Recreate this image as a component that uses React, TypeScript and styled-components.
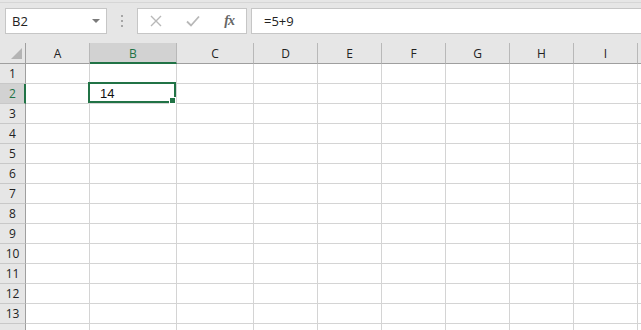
import styled, { createGlobalStyle } from "styled-components";

const GREEN = "#217346";
const GRID = "#d4d4d4";
const HEAD_BG = "#e6e6e6";
const HEAD_SEL = "#d2d2d2";
const HEAD_LINE = "#9f9f9f";

// the last column and last row run off the window, so their labels are not drawn
const COLS = [
    { name: "A", width: 64 },
    { name: "B", width: 87 },
    { name: "C", width: 77 },
    { name: "D", width: 64 },
    { name: "E", width: 64 },
    { name: "F", width: 64 },
    { name: "G", width: 64 },
    { name: "H", width: 64 },
    { name: "I", width: 64 },
    { name: "", width: 64 },
];
const ROWS = Array.from({ length: 14 }, (_, i) => i + 1);
const LAST_ROW = 14;

const GlobalStyle = createGlobalStyle`
    html, body { margin: 0; padding: 0; background: #ffffff; }
    body { width: 641px; height: 330px; overflow: hidden; }
`;

const Page = styled.div`
    width: 641px;
    height: 330px;
    overflow: hidden;
    background: ${HEAD_BG};
    font-family: "Open Sans", "Noto Sans", sans-serif;
`;

const TopEdge = styled.div`
    height: 2px;
    border-bottom: 1px solid #d6d6d6;
`;

const FormulaBar = styled.div`
    display: flex;
    align-items: stretch;
    height: 26px;
    padding: 5px 0 0 5px;
    margin-bottom: 9px;
`;

const NameBox = styled.div`
    box-sizing: border-box;
    width: 102px;
    display: flex;
    align-items: center;
    justify-content: space-between;
    padding: 0 6px 0 6px;
    background: #ffffff;
    border: 1px solid #c6c6c6;
    font-size: 13px;
    color: #222222;
`;

const Caret = styled.span`
    width: 0;
    height: 0;
    border-left: 4px solid transparent;
    border-right: 4px solid transparent;
    border-top: 4px solid #7a7a7a;
`;

const Grip = styled.div`
    width: 30px;
    display: flex;
    flex-direction: column;
    align-items: center;
    justify-content: center;
    gap: 3px;
    & span {
        width: 2px;
        height: 2px;
        background: #a6a6a6;
    }
`;

const FuncButtons = styled.div`
    box-sizing: border-box;
    width: 110px;
    display: flex;
    align-items: center;
    justify-content: space-between;
    padding: 0 12px 0 12px;
    background: #ffffff;
    border: 1px solid #c6c6c6;
`;

const Fx = styled.span`
    font-family: "Liberation Serif", "DejaVu Serif", serif;
    font-style: italic;
    font-weight: bold;
    font-size: 14px;
    color: #666666;
    letter-spacing: -1px;
`;

const FormulaInput = styled.div`
    box-sizing: border-box;
    flex: 1;
    margin-left: 4px;
    display: flex;
    align-items: center;
    padding-left: 12px;
    background: #ffffff;
    border: 1px solid #c6c6c6;
    border-right: none;
    font-size: 13px;
    color: #222222;
`;

const Sheet = styled.div`
    display: grid;
    grid-template-columns: 26px ${COLS.map((c) => `${c.width}px`).join(" ")};
    grid-template-rows: 21px;
    grid-auto-rows: 20px;
    background: #ffffff;
`;

const Corner = styled.div`
    position: relative;
    box-sizing: border-box;
    background: ${HEAD_BG};
    border-right: 1px solid ${HEAD_LINE};
    border-bottom: 1px solid ${HEAD_LINE};
    &::after {
        content: "";
        position: absolute;
        right: 3px;
        bottom: 4px;
        width: 0;
        height: 0;
        border-left: 11px solid transparent;
        border-bottom: 11px solid #b4b4b4;
    }
`;

const ColHead = styled.div<{ $sel?: boolean }>`
    box-sizing: border-box;
    display: flex;
    align-items: center;
    justify-content: center;
    background: ${(p) => (p.$sel ? HEAD_SEL : HEAD_BG)};
    border-right: 1px solid #b8b8b8;
    border-bottom: ${(p) => (p.$sel ? `2px solid ${GREEN}` : `1px solid ${HEAD_LINE}`)};
    padding-top: ${(p) => (p.$sel ? "1px" : "0")};
    font-size: 12px;
    color: ${(p) => (p.$sel ? GREEN : "#222222")};
`;

const RowHead = styled.div<{ $sel?: boolean }>`
    box-sizing: border-box;
    display: flex;
    align-items: center;
    justify-content: center;
    background: ${(p) => (p.$sel ? HEAD_SEL : HEAD_BG)};
    border-bottom: 1px solid #c8c8c8;
    border-right: ${(p) => (p.$sel ? `2px solid ${GREEN}` : `1px solid ${HEAD_LINE}`)};
    padding-left: ${(p) => (p.$sel ? "1px" : "0")};
    font-size: 12px;
    color: ${(p) => (p.$sel ? GREEN : "#222222")};
`;

const Cell = styled.div`
    position: relative;
    box-sizing: border-box;
    display: flex;
    align-items: center;
    padding-left: 10px;
    border-right: 1px solid ${GRID};
    border-bottom: 1px solid ${GRID};
    font-family: "Liberation Sans", Arial, sans-serif;
    font-size: 13px;
    color: #111111;
`;

const Selection = styled.div`
    position: absolute;
    top: -2px;
    left: -2px;
    right: 0;
    bottom: 0;
    border: 2px solid ${GREEN};
    pointer-events: none;
    z-index: 2;
`;

const Handle = styled.div`
    position: absolute;
    right: -2px;
    bottom: -3px;
    width: 7px;
    height: 7px;
    box-sizing: border-box;
    background: ${GREEN};
    border: 1px solid #ffffff;
    z-index: 3;
`;

function CancelIcon() {
    return (
        <svg width="12" height="12" viewBox="0 0 12 12">
            <path d="M1 1 L11 11 M11 1 L1 11" stroke="#b8b8b8" strokeWidth="1.4" fill="none" />
        </svg>
    );
}

function EnterIcon() {
    return (
        <svg width="14" height="12" viewBox="0 0 14 12">
            <path d="M1 6.5 L5 10.5 L13 1.5" stroke="#b8b8b8" strokeWidth="1.8" fill="none" />
        </svg>
    );
}

export default function App() {
    const selCol = "B";
    const selRow = 2;

    return (
        <Page>
            <GlobalStyle />
            <TopEdge />
            <FormulaBar>
                <NameBox>
                    <span>B2</span>
                    <Caret />
                </NameBox>
                <Grip>
                    <span />
                    <span />
                    <span />
                </Grip>
                <FuncButtons>
                    <CancelIcon />
                    <EnterIcon />
                    <Fx>fx</Fx>
                </FuncButtons>
                <FormulaInput>=5+9</FormulaInput>
            </FormulaBar>
            <Sheet>
                <Corner />
                {COLS.map((c, i) => (
                    <ColHead key={`c${i}`} $sel={c.name === selCol}>
                        {c.name}
                    </ColHead>
                ))}
                {ROWS.map((r) => [
                    <RowHead key={`h${r}`} $sel={r === selRow}>
                        {r < LAST_ROW ? r : null}
                    </RowHead>,
                    ...COLS.map((c, i) => {
                        const active = r === selRow && c.name === selCol;
                        return (
                            <Cell key={`${i}-${r}`}>
                                {active && "14"}
                                {active && (
                                    <Selection>
                                        <Handle />
                                    </Selection>
                                )}
                            </Cell>
                        );
                    }),
                ])}
            </Sheet>
        </Page>
    );
}
